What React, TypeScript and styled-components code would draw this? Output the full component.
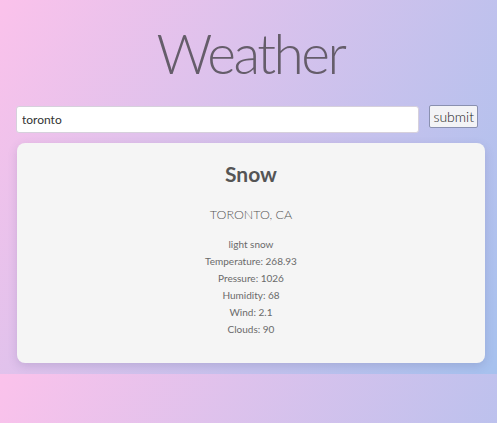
import styled, { createGlobalStyle } from 'styled-components';

const GlobalStyle = createGlobalStyle`
	html {
		background: linear-gradient(120deg, #fbc2eb 0%, #a6c1ee 100%);
	}
	body {
		margin: 0;
		font-family: Lato, "Open Sans", sans-serif;
		color: #666;
	}
`

const Container = styled.div`
	padding: 0 12px 11px 16px;
`

const Title = styled.h1`
	margin: 0;
	padding-top: 18px;
	height: 88px;
	text-align: center;
	font-size: 55px;
	font-weight: 300;
	letter-spacing: -2.5px;
	color: #655d6a;
	line-height: 70px;
`

const SearchForm = styled.form`
	display: flex;
	align-items: flex-start;
	gap: 10px;
	margin-right: 7px;
`

const Input = styled.input`
	flex: 1;
	height: 27px;
	box-sizing: border-box;
	border: 1px solid #d6d0dc;
	border-radius: 3px;
	background: #fff;
	padding: 0 5px;
	font-family: Lato, sans-serif;
	font-size: 12px;
	color: #333;
	outline: none;
`

const Button = styled.button`
	margin-top: -1px;
	height: 23px;
	padding: 0 3px;
	background: #f3f3f6;
	border: 1px solid #8a90b0;
	border-radius: 2px;
	font-family: Lato, sans-serif;
	font-size: 14px;
	font-weight: 300;
	color: #222;
`

const Card = styled.section`
	margin: 10px 0 0 1px;
	height: 220px;
	box-sizing: border-box;
	padding-top: 18px;
	background: #f5f5f5;
	border-radius: 8px;
	box-shadow: 0 3px 10px rgba(80, 70, 120, 0.18);
	text-align: center;
`

const Condition = styled.h2`
	margin: 0;
	font-size: 21px;
	font-weight: 700;
	color: #555;
	line-height: 26px;
`

const City = styled.div`
	margin-top: 19px;
	font-size: 12.5px;
	font-weight: 300;
	line-height: 18px;
	color: #555;
`

const Details = styled.ul`
	list-style: none;
	margin: 12px 0 0;
	padding: 0;
`

const Detail = styled.li`
	font-size: 10px;
	font-weight: 400;
	line-height: 17px;
	color: #6a6a6a;
`

const details = [
	'light snow',
	'Temperature: 268.93',
	'Pressure: 1026',
	'Humidity: 68',
	'Wind: 2.1',
	'Clouds: 90',
]

function App() {
	return (
		<Container>
			<GlobalStyle />
			<Title>Weather</Title>
			<SearchForm onSubmit={(e) => e.preventDefault()}>
				<Input defaultValue="toronto" />
				<Button type="submit">submit</Button>
			</SearchForm>
			<Card>
				<Condition>Snow</Condition>
				<City>TORONTO, CA</City>
				<Details>
					{details.map((d) => (
						<Detail key={d}>{d}</Detail>
					))}
				</Details>
			</Card>
		</Container>
	)
}

export default App
